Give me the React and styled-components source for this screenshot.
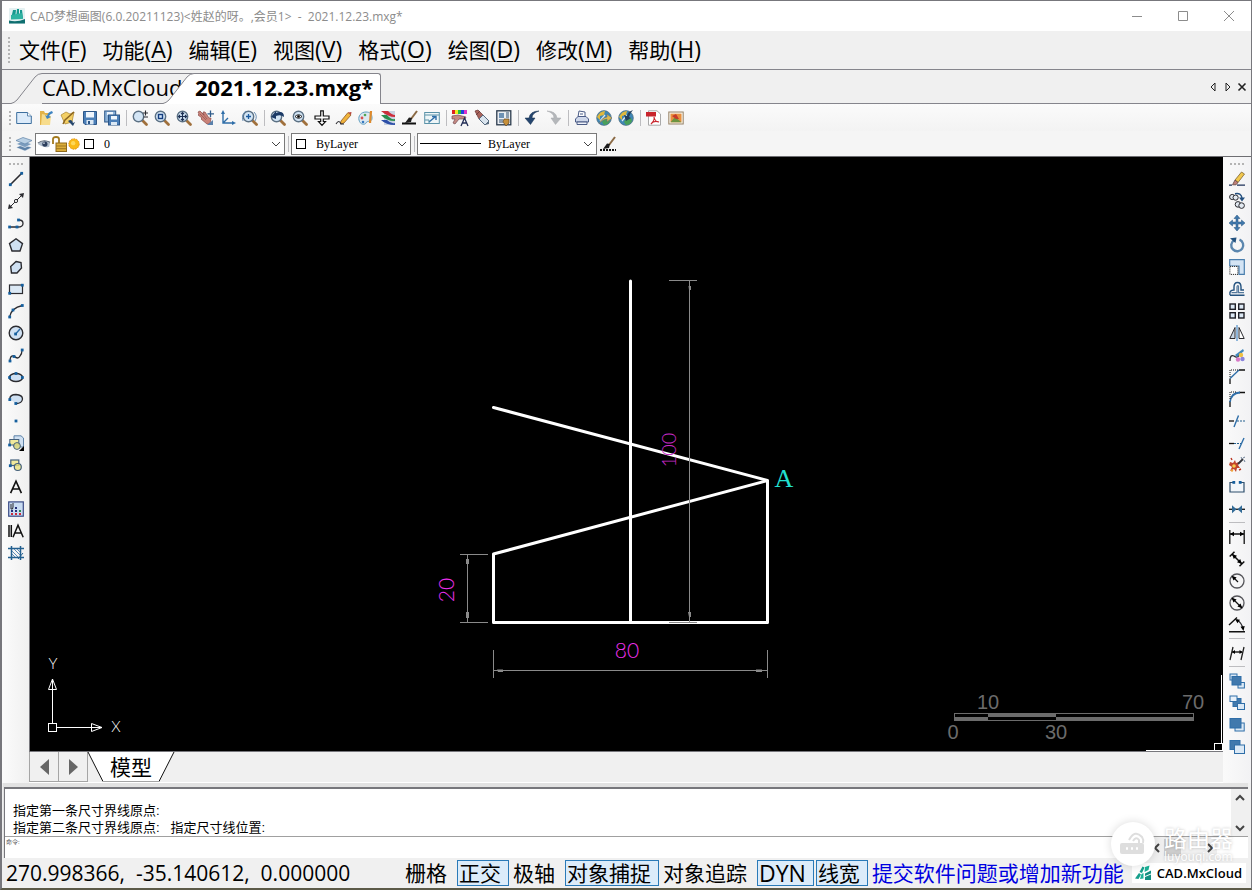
import React from "react";
import styled, { createGlobalStyle, css } from "styled-components";

const GlobalStyle = createGlobalStyle`
  * {
    box-sizing: border-box;
  }

  body {
    margin: 0;
    background: #f0f0f0;
    color: #000;
    font-family: "Open Sans", "Noto Sans CJK SC", sans-serif;
  }

  button, input, select {
    font-family: inherit;
    color: inherit;
  }
`;

/* ---------- icons, all on a 16 x 16 grid ---------- */

const INK = "#2b2b30";
const BLUE = "#2f6ea8";
const PALE = "#cfe0f2";

const line = { fill: "none", stroke: INK, strokeWidth: 1.3 };
const blueLine = { fill: "none", stroke: BLUE, strokeWidth: 1.4 };

const Dots = ({ at }) =>
  at.map(([x, y]) => (
    <rect key={`${x}-${y}`} x={x - 1.4} y={y - 1.4} width="2.8" height="2.8" fill="#155f9e" />
  ));

const Lens = ({ children }) => (
  <>
    <path d="M10 10 L14.5 14.5" stroke="#a0703c" strokeWidth="2.8" strokeLinecap="round" />
    <circle cx="6.5" cy="6.5" r="5.2" fill="#d3e5f5" stroke="#5c7184" strokeWidth="1.4" />
    {children}
  </>
);

const Globe = () => (
  <>
    <circle cx="8" cy="8" r="7.4" fill="#3f87b5" stroke="#4c6473" strokeWidth=".6" />
    <path d="M1 7 Q4 1 9 1 L8 5 L4 6 L4 10 Z" fill="#e0b83c" />
    <path d="M8 9 L13 8 L14 11 Q12 15 8 15 L6 12 Z" fill="#49a05a" />
    <path d="M4 11 L9 5" stroke="#dfeaf2" strokeWidth="1.2" />
  </>
);

const Brush = () => (
  <>
    <path d="M15 1 L9 9" stroke="#8b6a45" strokeWidth="2" />
    <path d="M10 8 L7 7.5 L3 13 L9 12 Z" fill="#1d1d1d" />
  </>
);

const drawings = {
  newFile: (
    <>
      <path d="M.7 2.5 H11.5 L15.3 6 V13.5 H.7 Z" fill="#dcebfa" stroke="#3d6f9e" />
      <path d="M11.5 2.5 V6 H15.3" fill="#fff" stroke="#3d6f9e" strokeWidth=".8" />
    </>
  ),
  open: (
    <>
      <path d="M2 1 L6 1 L7 3 L11 3 L11 14 L2 15 Z" fill="#e3b348" />
      <path d="M4 4 L13 6 L12 15 L3 15 Z" fill="#f7dc8c" />
      <path d="M14 1 Q10 2 9 6 L7 5 L9 9 L13 7 L11 6 Q12 4 15 3 Z" fill="#3e83c0" />
    </>
  ),
  edit: (
    <>
      <path d="M1 5 L6 2 L10 4 L14 2 L12 12 L5 14 Z" fill="#f3cf64" stroke="#a8822d" strokeWidth=".7" />
      <path d="M14 2 L5 10 L3 14" fill="none" stroke="#8a6420" strokeWidth="1.5" />
      <path d="M8 11 Q12 8 13 13 L15 12 L13 16 L10 13 Z" fill="#26466c" />
    </>
  ),
  save: (
    <>
      <path d="M1.5 1.5 H14.5 V14.5 H3 L1.5 13 Z" fill="#4b7fb8" stroke="#2c5688" />
      <rect x="4" y="2" width="8" height="5.5" fill="#eef5fc" />
      <rect x="4.5" y="10" width="7" height="4.5" fill="#dbe8f4" />
      <rect x="6" y="11" width="2" height="3" fill="#2c5688" />
    </>
  ),
  saveAll: (
    <>
      <rect x=".7" y="1" width="11" height="11" fill="#8db2d8" stroke="#2c5688" />
      <rect x="3" y="2" width="6" height="3" fill="#eef5fc" />
      <rect x="4.5" y="5" width="11" height="10" fill="#4b7fb8" stroke="#2c5688" />
      <rect x="7" y="6" width="6" height="3.5" fill="#eef5fc" />
      <rect x="7" y="12" width="6" height="3" fill="#dbe8f4" />
    </>
  ),
  zoomInOut: <Lens><path d="M11 3 H16 M13.5 .5 V5.5 M11.5 7 H16" {...line} strokeWidth="1.1" /></Lens>,
  zoomWindow: <Lens><rect x="4.5" y="4.5" width="4" height="4" {...blueLine} stroke="#153e80" /></Lens>,
  zoomExtents: (
    <Lens>
      <path
        d="M6.5 2.5 V10.5 M2.5 6.5 H10.5 M5 4 L6.5 2.5 L8 4 M5 9 L6.5 10.5 L8 9 M4 5 L2.5 6.5 L4 8 M9 5 L10.5 6.5 L9 8"
        fill="none"
        stroke="#1c2f52"
        strokeWidth="1.1"
      />
    </Lens>
  ),
  pan: (
    <>
      <path d="M0 2 L2 1 L6 5 L5 2 L7 2 L11 8 L13 8 L12 14 L9 14 L3 9 L4 8 L0 5 L1 4 Z" fill="#c98278" stroke="#8a4a48" strokeWidth=".7" />
      <path d="M2 4 L8 10 M4 3 L9 9" stroke="#8a4a48" strokeWidth=".6" />
      <path d="M12.5 .5 V7 M9.5 3.8 H16" stroke="#2f5c8a" strokeWidth="1.3" />
      <path d="M9 15 L15 10 L15 15 Z" fill="#5a81ab" />
    </>
  ),
  axes: (
    <>
      <path d="M3 3 V13 H13 M3 13 L8 8" {...blueLine} />
      <path d="M3 0 L5 4 H1 Z M16 13 L12 11 V15 Z" fill={BLUE} />
    </>
  ),
  zoomRealtime: (
    <>
      <Lens><path d="M4 6.5 H9 M6.5 4 V9" stroke="#1d5ca0" strokeWidth="1.3" /></Lens>
      <path d="M1 11 Q-1 4 4 1 M12 2 Q16 6 13 11" fill="none" stroke="#6c90b4" />
    </>
  ),
  zoomPrevious: <Lens><path d="M1 7 L6 1 V3 Q14 0 14 7 Q11 4 6 6 V9 Z" fill="#1b3a66" /></Lens>,
  zoomView: <Lens><path d="M3 6.5 Q6.5 3 10 6.5 Q6.5 10 3 6.5 Z" fill="#fff" stroke="#222" /><circle cx="6.5" cy="6.5" r="1.3" /></Lens>,
  panArrows: <path d="M6.7 .8 H9.3 V6 H15 V9 H9.3 V11.5 H11.5 L8 15.4 L4.5 11.5 H6.7 V9 H1 V6 H6.7 Z" fill="#fff" stroke="#111" strokeWidth="1.2" />,
  pencil: (
    <>
      <path d="M5 11 L12 2.5 L15 5 L8 13 L4.5 14 Z" fill="#f0b43c" stroke="#8f5a24" strokeWidth=".8" />
      <path d="M12 2.5 L15 5 L15.5 2 Z" fill="#b8443c" />
      <path d="M0 14 Q3 9 5 14 L8 14" {...line} strokeWidth="1.1" />
    </>
  ),
  palette: (
    <>
      <path d="M8 2 C3 2 0 6 1 10 C2 15 7 15 8 13 C9 10 14 13 14 8 C14 4 12 2 8 2 Z" fill="#dde8f1" stroke="#5d9ec0" />
      <circle cx="4" cy="8" r="1.4" fill="#d65050" />
      <circle cx="7" cy="5" r="1.3" fill="#51a555" />
      <circle cx="5" cy="12" r="1.3" fill="#3678c0" />
      <path d="M13 1 L12 13" stroke="#de8a2c" strokeWidth="2.2" />
    </>
  ),
  colorLayers: (
    <>
      <rect x="4" y="1" width="11" height="14" fill="#c9d3e2" />
      <path d="M1 1 H8 Q12 5 15 5 V7 Q8 7 1 1 Z" fill="#ce2f3d" />
      <path d="M1 5 H7 Q11 10 15 9 V11 Q6 11 1 5 Z" fill="#2b8d4e" />
      <path d="M1 10 H7 Q11 14 15 13 V15 Q6 15 1 10 Z" fill="#2d4fa8" />
    </>
  ),
  brush: <><Brush /><path d="M0 13.5 H14 " stroke="#111" strokeWidth="2" /></>,
  resize: (
    <>
      <rect x=".7" y="2.5" width="14.6" height="11" fill="#eef6f8" stroke="#5b93a8" />
      <path d="M1 5 H15" stroke="#5b93a8" />
      <path d="M5 12 L11 7 M8 6.5 H12 V10" {...blueLine} />
      <path d="M1 10 H5 V13" fill="none" stroke="#5b93a8" />
    </>
  ),
  textStyle: (
    <>
      <path d="M0 0 H3 V4 H0 Z" fill="#d22" /><path d="M3 0 H6 V4 H3 Z" fill="#ee2" /><path d="M6 0 H9 V4 H6 Z" fill="#2b4" />
      <path d="M9 0 H12 V4 H9 Z" fill="#24d" /><path d="M12 0 H15 V4 H12 Z" fill="#d3c" />
      <path d="M0 6 L6 5 L14 7 L13 9 L7 9 L3 14 L1 13 L3 9 L0 9 Z" fill="#c58a83" stroke="#734a52" strokeWidth=".7" />
      <path d="M9 16 L12.5 8 L16 16 M10 13 H15" fill="none" stroke="#222d55" strokeWidth="1.3" />
    </>
  ),
  match: (
    <>
      <path d="M1 1 L4 0 L9 5 L5 9 Z" fill="#a8645c" stroke="#633" strokeWidth=".7" />
      <path d="M2 5 L6 1" stroke="#633" strokeWidth=".8" />
      <path d="M9 5 L15 11 L11 15 L5 9 Z" fill="#d9e4ee" stroke="#586c80" />
      <path d="M11 15 L15 11 L15 14 Z" fill="#586c80" />
    </>
  ),
  properties: (
    <>
      <rect x=".8" y=".8" width="14" height="14" fill="#e9edf2" stroke="#2a3a4c" strokeWidth="1.3" />
      <rect x="3" y="3" width="5" height="5" fill="#6e92b5" />
      <path d="M10 3 H13 M10 5 H13 M10 7 H13 M3 10 H7 M3 12 H7" stroke="#33506e" />
      <path d="M8 9 H13 V13 L10 16 L7 12 Z" fill="#c7903a" stroke="#5f4526" strokeWidth=".7" />
    </>
  ),
  undo: <path d="M15 1 Q6 1 5 8 L1 8 L6.5 14.5 L11 8 L8 8 Q8 3 15 1 Z" fill="#24456f" stroke="#16304f" strokeWidth=".5" />,
  redo: <path d="M1 1 Q10 1 11 8 L15 8 L9.5 14.5 L5 8 L8 8 Q8 3 1 1 Z" fill="#b4b7ba" stroke="#a6a9ac" strokeWidth=".5" />,
  print: (
    <>
      <path d="M4 7 L5 1 L11 2 L11 7 Z" fill="#fff" stroke="#4b5c86" />
      <path d="M1.5 9 L4 6.5 H12 L14.5 9 V12 H1.5 Z" fill="#cfd8ea" stroke="#4b5c86" />
      <path d="M3 12 H13 V14.5 H3 Z" fill="#eef1f8" stroke="#4b5c86" />
      <path d="M6 4 H9" stroke="#4b5c86" />
    </>
  ),
  globeSend: <><Globe /><path d="M3 14 Q5 8 11 7 V4 L16 8 L11 12 V9 Q7 9 3 14 Z" fill="#dcb850" stroke="#61717d" strokeWidth=".6" /></>,
  globeGet: <><Globe /><path d="M15 0 Q9 2 9 6 L6 5 L8 11 L13 8 L11 7 Q12 3 15 0 Z" fill="#233f5d" /></>,
  pdf: (
    <>
      <path d="M2.5 .8 H11 L14.5 4 V15.2 H2.5 Z" fill="#fff" stroke="#a9a9a9" />
      <rect x="0" y="2" width="10" height="4.5" fill="#c8242c" />
      <path d="M5 14 Q9 10 8 7 Q9 12 13 12 Q8 10 5 14 Z" fill="none" stroke="#c8242c" strokeWidth="1.1" />
    </>
  ),
  picture: (
    <>
      <rect x=".8" y="2" width="14.4" height="12" fill="#f7f2e6" stroke="#98846a" />
      <rect x="2.5" y="3.7" width="11" height="8.6" fill="#e98f3e" />
      <path d="M2.5 12.3 L7 7 L13.5 12.3 Z" fill="#6d9440" />
      <path d="M4 6 L8 4 L11 9 L8 9 Z" fill="#c43a29" />
    </>
  ),
  layerStack: (
    <>
      <path d="M0 11.5 L7 8.5 L16 11.5 L9 15 Z" fill="#5d82a8" stroke="#fff" strokeWidth=".5" />
      <path d="M0 8 L7 5 L16 8 L9 11.5 Z" fill="#7c9dbe" stroke="#fff" strokeWidth=".6" />
      <path d="M0 4.5 L7 1.5 L16 4.5 L9 8 Z" fill="#b9d0e4" stroke="#5f83a8" strokeWidth=".7" />
    </>
  ),
  layerBrush: <><Brush /><path d="M0 14 H16" stroke="#111" strokeWidth="2" strokeDasharray="2 1" /></>,
  // draw
  lineTool: <><path d="M2.5 13.5 L13.5 2.5" {...line} strokeWidth="1.6" /><Dots at={[[2.3, 13.7], [13.7, 2.3]]} /></>,
  xline: (
    <>
      <path d="M2 14 L14 2" {...line} strokeWidth="1" />
      <path d="M0 16 L1 11 L5 15 Z M16 0 L11 1 L15 5 Z" fill={INK} />
      <circle cx="8" cy="8" r="1.6" fill="#fff" stroke={INK} />
    </>
  ),
  polyline: <><path d="M2 12 H10 M10 12 Q15 12 15 8.5 Q15 5 11 5" {...line} /><Dots at={[[1.6, 12], [9, 12], [10.5, 5]]} /></>,
  polygon: <path d="M8 1.8 L14.5 6.6 L12 14 H4 L1.5 6.6 Z" fill={PALE} stroke={INK} strokeWidth="1.4" />,
  freePolygon: <path d="M8 2.5 L13 3.5 L13.5 9 L9 14 H3.5 L2.7 7.5 Z" fill={PALE} stroke={INK} strokeWidth="1.4" />,
  rectangle: <><rect x="1.5" y="4" width="13" height="8.5" fill="#dce9f5" stroke={INK} strokeWidth="1.2" /><Dots at={[[1.7, 12.3], [14.3, 4.2]]} /></>,
  arc: <><path d="M1.5 14 Q3 5 14.5 2.5" {...line} /><Dots at={[[1.7, 14], [5, 7], [14.3, 2.5]]} /></>,
  circle: <><circle cx="8" cy="8" r="6.8" fill={PALE} stroke={INK} strokeWidth="1.4" /><path d="M8 8.5 L12 4" {...blueLine} /><Dots at={[[7.6, 9]]} /></>,
  spline: <><path d="M2 14 Q2 8 6 9 Q10 13 12 9 Q14 7 14 3" {...line} /><Dots at={[[2, 14], [6, 9.5], [14.2, 3]]} /></>,
  ellipse: <><ellipse cx="8" cy="8.5" rx="6.6" ry="4" fill={PALE} stroke={INK} strokeWidth="1.4" /><Dots at={[[1.6, 8.5], [14.4, 8.5], [8, 4.5]]} /></>,
  ellipseArc: <><path d="M1.7 8 Q2 3.5 8 3.5 Q14.5 4 14.5 8 Q14 12.5 8 12.5" fill={PALE} stroke={INK} strokeWidth="1.3" /><Dots at={[[1.8, 8.6], [7.8, 12.5]]} /></>,
  point: <Dots at={[[8, 8]]} />,
  insertBlock: (
    <>
      <path d="M6 .8 H13 L15.5 3 V12 H6 Z" fill={PALE} stroke="#5f83a8" />
      <rect x="1.8" y="4.5" width="9" height="5.5" fill="#f1ea9c" stroke="#44607c" />
      <circle cx="9" cy="11" r="3.4" fill="#e9e27c" fillOpacity=".8" stroke="#44607c" />
      <Dots at={[[1.6, 10]]} />
      <path d="M16 11 V16 H11 Z" fill="#000" />
    </>
  ),
  makeBlock: (
    <>
      <rect x="2.8" y="3" width="8" height="5.5" fill="#f1ea9c" stroke="#44607c" strokeWidth="1.2" />
      <circle cx="9.8" cy="10" r="3.5" fill="#e9e27c" fillOpacity=".8" stroke="#44607c" strokeWidth="1.2" />
      <Dots at={[[2.3, 8.7]]} />
    </>
  ),
  text: <path d="M2.6 14.2 L8 2.2 L13.4 14.2 M4.7 10 H11.3" fill="none" stroke="#111" strokeWidth="1.6" />,
  table: (
    <>
      <rect x=".7" y=".9" width="14.6" height="14.3" fill="#c9dcf3" stroke="#3a4b86" strokeWidth="1.2" />
      <path d="M3 3 V8 Q5 9 5 6 V2" {...line} strokeWidth="1" />
      <path d="M7 7 H9 M3 10 H5 M7 10 H9" stroke="#26317a" strokeWidth="2" />
      <path d="M11 10 H13" stroke="#2a8b54" strokeWidth="2" />
      <path d="M3 13 H5 M7 13 H9 M11 13 H13" stroke="#cc2b3d" strokeWidth="2" />
    </>
  ),
  mtext: <path d="M1 2 V14 M3.3 2 V14 M5 14.2 L10 2.2 L15.2 14.2 M7 10 H13.3" fill="none" stroke="#111" strokeWidth="1.5" />,
  hatch: (
    <>
      <path d="M3.5 1 V15 M12.5 1 V15 M0 3.5 H16 M0 12.5 H16" stroke="#24608f" strokeWidth="1.5" />
      <path d="M4 6 L10 12 M4 9 L7 12 M6 4 L12 10 M9 4 L12 7" stroke="#4b7fae" strokeWidth=".9" />
      <path d="M10 14 L15 8" stroke="#24608f" />
    </>
  ),
  // modify
  erase: (
    <>
      <path d="M6 9 L12.5 1 L15.5 3 L9 11.5 Z" fill="#f1c74d" stroke="#7d6431" strokeWidth=".8" />
      <path d="M6 9 L9 11.5 L7 13.8 L3.5 13.8 Z" fill="#c08078" stroke="#5d4444" strokeWidth=".8" />
      <path d="M0 14.2 H3 M8 14.2 H16" stroke="#1c3159" strokeWidth="1.2" />
    </>
  ),
  copy: (
    <>
      <circle cx="3.2" cy="4" r="2.6" fill="#e3eaf2" stroke={INK} />
      <circle cx="6.6" cy="4.6" r="2.6" fill="#e3eaf2" stroke={INK} />
      <circle cx="9" cy="11.4" r="2.8" fill="#e3eaf2" stroke={INK} />
      <circle cx="12.6" cy="12.6" r="2.8" fill="#e3eaf2" stroke={INK} />
      <path d="M6 .8 Q12 -.5 13 5" {...blueLine} stroke="#234f7f" />
      <path d="M10 4.5 H16 L13 8.5 Z" fill="#234f7f" />
    </>
  ),
  move: <path d="M8 0 L11 3.5 H9 V7 H12.5 V5 L16 8 L12.5 11 V9 H9 V12.5 H11 L8 16 L5 12.5 H7 V9 H3.5 V11 L0 8 L3.5 5 V7 H7 V3.5 H5 Z" fill="#4179ad" stroke="#24527f" strokeWidth=".5" />,
  rotate: <><path d="M5 3.2 A6 6 0 1 0 10.5 2.7" fill="none" stroke="#5b86ae" strokeWidth="2.4" /><path d="M1 1.2 L7.5 .5 L6.5 6 Z" fill="#24527f" /></>,
  scale: (
    <>
      <path d="M.7 .7 H15.3 V15.3 H10 V7 H.7 Z" fill="#d4e4f4" stroke="#4a7ead" strokeWidth="1.2" />
      <rect x=".9" y="7.4" width="8" height="8" fill="#fff" stroke="#111" strokeDasharray="1 1" />
    </>
  ),
  offset: (
    <>
      <path d="M1 14.2 H15.5 M1 14 Q0 9 5 9 V6 Q5 1.5 8.5 1.5 Q12 1.5 12 6 V9 H15" fill="none" stroke="#24527f" strokeWidth="1.4" />
      <path d="M2.5 11.6 H8 V6.5 Q8 4 9.5 5 V11.6 H15" fill="none" stroke="#55799c" strokeWidth="1.2" />
    </>
  ),
  array: (
    <g fill="#dce8f4" stroke="#1f1f26" strokeWidth="1.4">
      <rect x="1" y="1" width="5.3" height="5.3" /><rect x="9.7" y="1" width="5.3" height="5.3" />
      <rect x="1" y="9.7" width="5.3" height="5.3" /><rect x="9.7" y="9.7" width="5.3" height="5.3" />
    </g>
  ),
  mirror: (
    <>
      <path d="M6 2.5 V13.5 H.8 Z" fill="#c8d6e4" stroke={INK} />
      <path d="M10 2.5 V13.5 H15.2 Z" fill="#fff" stroke={INK} />
      <path d="M8 0 V16" stroke="#2a78c0" />
    </>
  ),
  splineEdit: (
    <>
      <path d="M1 14 Q1 7 5 9 Q9 12 10 7" {...line} />
      <path d="M6 8 L14 2 L15 4 L8 10 Z" fill="#3f86bb" />
      <circle cx="12" cy="8" r="2.2" fill="#eebf42" /><circle cx="9" cy="12.5" r="2.2" fill="#d678c6" />
      <circle cx="13.5" cy="12" r="2.2" fill="#8a83dc" />
    </>
  ),
  chamfer: <><path d="M1 15 V9.5 M10 1 H16" stroke="#111" strokeWidth="1.3" /><path d="M1 9.5 L10 1" {...blueLine} /><path d="M1 8 V1 H9" fill="none" stroke="#111" strokeDasharray="1 1" /></>,
  fillet: <><path d="M1 16 V10 M10 1.5 H16" stroke="#111" strokeWidth="1.3" /><path d="M1 11 Q2 2 11 1.5" {...blueLine} strokeWidth="1.8" /><path d="M1 8 V1 H8" fill="none" stroke="#111" strokeDasharray="1 1" /></>,
  trim: <><path d="M0 8 H5" stroke="#111" strokeWidth="1.3" /><path d="M5 14 L9.5 2.5" {...blueLine} /><path d="M8 8 H16" stroke="#24608f" strokeDasharray="2 1" /></>,
  extend: <><path d="M0 8.5 H5" stroke="#111" strokeWidth="1.3" /><path d="M5 8.5 H12" stroke="#24608f" strokeDasharray="2 1" /><path d="M10 14 L15 3" {...blueLine} /></>,
  explode: (
    <>
      <path d="M1 5 L4 6 L6 3 L7 6 L10 5 L9 8 L11 11 L8 11 L7 15 L5 12 L1 14 L3 10 L0 8 Z" fill="#c0442c" />
      <circle cx="5" cy="9" r="1.8" fill="#f6ca4b" />
      <circle cx="3" cy="13.5" r="1.2" fill="#f0a23a" />
      <path d="M9 7 L14 2" stroke="#33363c" strokeWidth="1.8" />
      <path d="M12 0 L13 2 M15 3 L16 5 M14 1 L16 0" stroke="#6d7f96" />
      <path d="M10 13 L12 12 M3 3 L2 1" stroke="#b83420" strokeWidth="1.4" />
    </>
  ),
  breakTool: <><path d="M4.5 3.5 H1 V13 H15 V3.5 H11.5" fill="#f2f6fa" stroke="#2e4e6c" strokeWidth="1.2" /><Dots at={[[4.8, 3.4], [11.2, 3.4]]} /></>,
  join: <><path d="M0 8.3 H16" stroke="#222" strokeWidth="1.4" /><path d="M3 4.3 L7.5 8.3 L3 12.3 Z M13 4.3 L8.5 8.3 L13 12.3 Z" fill="#326b97" /></>,
  dimLinear: <><path d="M.8 1 V15 M15.2 1 V15 M1 5 H15" stroke="#111" strokeWidth="1.3" /><path d="M1 5 L5 2.7 V7.3 Z M15 5 L11 2.7 V7.3 Z" /></>,
  dimAligned: <><path d="M.7 5.5 L5.5 .7 M10.5 15.3 L15.3 10.5 M3 3 L13 13" stroke="#111" strokeWidth="1.5" /><path d="M3 3 L8 4.8 L4.8 8 Z M13 13 L8 11.2 L11.2 8 Z" /></>,
  dimRadius: <><circle cx="8" cy="8" r="7" fill="none" stroke="#55555a" strokeWidth="1.3" /><path d="M9 9 L4 4" stroke="#111" strokeWidth="1.3" /><path d="M2.6 2.8 L7.6 4.5 L4.5 7.4 Z" /></>,
  dimDiameter: <><circle cx="8" cy="8" r="7" fill="none" stroke="#55555a" strokeWidth="1.3" /><path d="M3 3 L13 13" stroke="#111" strokeWidth="1.3" /><path d="M2.6 2.8 L7.6 4.5 L4.5 7.4 Z M13.4 13.2 L8.4 11.5 L11.5 8.6 Z" /></>,
  dimAngular: <><path d="M0 14.8 H16 M0 8 L8 .5" stroke="#111" strokeWidth="1.4" /><path d="M8 3 Q13 6 14 12" {...line} /><path d="M6 2 L11 2.8 L8.5 6.3 Z M14.5 14 L11.5 9.7 L15.7 9 Z" /></>,
  dimContinue: <><path d="M1 15 L4 2 M12 15 L15 2 M3 7 H13" stroke="#222" strokeWidth="1.3" /><path d="M3 7 L6 5 V9 Z M13.5 7 L10.5 5 V9 Z" /></>,
  bringFront: <g stroke={BLUE}><rect x="1" y="1" width="7" height="6" fill="#dbe9f6" /><rect x="9" y="9.5" width="6.4" height="5.5" fill="#dbe9f6" /><rect x="3" y="3.5" width="9" height="8.5" fill="#4179ad" /></g>,
  sendBack: <g stroke={BLUE}><rect x="4" y="3.5" width="8" height="8" fill="#4179ad" /><rect x="1" y="1" width="7" height="5.5" fill="#e8f1fa" /><rect x="8.5" y="8.5" width="7" height="6" fill="#dbe9f6" /></g>,
  bringAbove: <g stroke={BLUE}><rect x="6" y="6" width="9.2" height="8" fill="#dbe9f6" /><rect x="1" y="1.5" width="11" height="9.5" fill="#4179ad" /></g>,
  sendUnder: <g stroke={BLUE}><rect x="1" y="1.5" width="10" height="9" fill="#4179ad" /><rect x="5.5" y="6" width="10" height="8.5" fill="#dbe9f6" /></g>,
  eye: <><path d="M1 8 Q7 2 15 6 L14 11 Q7 13 1 8 Z" fill="#aebccb" /><path d="M1 7 Q7 2 15 6" fill="none" stroke="#5b6675" strokeWidth="1.2" /><circle cx="9" cy="8" r="3" fill="#2c3e5d" /><circle cx="8" cy="7" r=".9" fill="#dfe7f0" /></>,
  unlock: <><path d="M2 8 V3 Q2 1 5 1 Q8 1 8 3 V8" fill="none" stroke="#a37a1e" strokeWidth="1.8" /><rect x="5" y="7" width="10.5" height="8.5" fill="#dcae3a" stroke="#8f6a1c" /><path d="M5 10 H15 M5 12.7 H15" stroke="#9d7622" /></>,
  sun: <><circle cx="8" cy="8" r="6" fill="#f9b917" stroke="#dc8d12" strokeDasharray="2 1" /><circle cx="7" cy="7" r="2.5" fill="#fdd85a" /></>,
  swatch: <rect x="3.5" y="3.5" width="9" height="9" fill="#fff" stroke="#000" />,
};

const Svg = styled.svg`
  display: block;
  flex: none;
  overflow: visible;
`;

const Icon = ({ name, size = 16 }) => (
  <Svg width={size} height={size} viewBox="0 0 16 16" aria-hidden="true">
    {drawings[name]}
  </Svg>
);

const chevrons = {
  down: "M1 3 L5 7 L9 3",
  up: "M1 7 L5 3 L9 7",
  left: "M7 1 L3 5 L7 9",
  right: "M3 1 L7 5 L3 9",
};

const Chevron = ({ dir = "down", weight = 1 }) => (
  <Svg width="10" height="10" viewBox="0 0 10 10" aria-hidden="true">
    <path d={chevrons[dir]} fill="none" stroke="#444" strokeWidth={weight} />
  </Svg>
);

const AppLogo = () => (
  <Svg width="16" height="16" viewBox="0 0 16 16" aria-hidden="true">
    <rect x="0" y="0" width="16" height="16" rx="1" fill="#e4f1f2" />
    <path d="M2 11 L4 2 H7 L6 11 Z M7 10 L8 1 H10 L10 10 Z M11 10 V2 H13 L14 10 Z" fill="#179a90" />
    <path d="M2 7 L13 5 L14 11 L2 11.5 Z" fill="#2fb3a2" />
    <path d="M0 12.5 Q8 14.5 16 11 V15.5 H0 Z" fill="#0f6f70" />
  </Svg>
);

const BrandLogo = () => (
  <Svg width="17" height="16" viewBox="0 0 17 16" aria-hidden="true">
    <path d="M0 13.5 L4 8 L6 9.5 L3.5 14 Z M4.5 7 L7.5 1.5 L9.5 2.5 L7 8 Z" fill="#17a08c" />
    <path d="M6.5 9 L8.5 8 L8.5 13.5 L5 14 Z M10 2 L14.5 .5 L13.5 5 L9.5 7 Z" fill="#1bb096" />
    <path d="M10 8.5 L16 5.5 V8.5 L10 11 Z M10 12 L16 9.5 V15 H10 Z" fill="#128f80" />
  </Svg>
);

/* ---------- window frame ---------- */

const AppWindow = styled.div`
  min-height: 100vh;
  display: flex;
  flex-direction: column;
  border: solid #77777c;
  border-width: 1px 1px 2px 2px;
  border-bottom-color: #5c5a48;
  background: #f0f0f0;
`;

const TitleBar = styled.header`
  height: 30px;
  display: flex;
  align-items: center;
  gap: 5px;
  padding: 0 16px 0 7px;
  background: #fff;
`;

const Title = styled.h1`
  flex: 1;
  margin: 0;
  font-size: 12px;
  font-weight: 400;
  color: #8c8c8c;
  white-space: pre;
`;

const WindowButtons = styled.div`
  display: flex;
  gap: 34px;
`;

const PlainButton = styled.button`
  display: flex;
  align-items: center;
  justify-content: center;
  padding: 0;
  border: 0;
  background: none;
`;

const MenuBar = styled.nav`
  height: 38px;
  display: flex;
  align-items: center;
  padding-left: 4px;
`;

const MenuItem = styled.button`
  padding: 0 8px;
  border: 0;
  background: none;
  font-size: 21px;
  line-height: 28px;
  white-space: nowrap;

  &:first-of-type {
    padding-left: 7px;
  }
`;

const Latin = styled.span`
  font-size: 23px;
  line-height: 24px;

  u {
    text-decoration-thickness: 1px;
    text-underline-offset: 3px;
  }
`;

const Grip = styled.span`
  flex: none;
  ${({ $vertical }) =>
    $vertical
      ? css`
          width: 14px;
          height: 2px;
          margin: 6px 0 3px;
          background: repeating-linear-gradient(90deg, #b4b4b4 0 2px, transparent 2px 4px);
        `
      : css`
          width: 2px;
          height: ${({ $length }) => $length || 14}px;
          margin: 0 2px;
          background: repeating-linear-gradient(#b4b4b4 0 2px, transparent 2px 4px);
        `}
`;

/* ---------- document tabs ---------- */

const TabStrip = styled.div`
  height: 35px;
  display: flex;
  align-items: flex-end;
  padding: 0 4px 0 9px;
  border-top: 1px solid #85858c;
  border-bottom: 1px solid #85858c;
`;

const TabButton = styled.button`
  display: flex;
  padding: 0;
  border: 0;
  background: none;
  height: 31px;
  margin: 0 0 -1px;
  font-size: 22px;
  line-height: 26px;
  font-weight: ${({ $active }) => ($active ? 700 : 400)};

  & + & {
    margin-left: -31px;
    z-index: 1;
  }
`;

const TabLabel = styled.span`
  height: 31px;
  overflow: hidden;
  white-space: nowrap;
  border-top: 1px solid #85858c;
  ${({ $active }) =>
    $active
      ? css`
          padding: 0 7px 0 1px;
          border-right: 1px solid #85858c;
          border-radius: 0 3px 0 0;
          background: #fff;
        `
      : css`
          width: 152px;
          text-align: left;
        `}
`;

const TabControls = styled.div`
  display: flex;
  align-items: center;
  gap: 3px;
  height: 32px;
  margin-left: auto;
`;

const DocumentTab = ({ active, children }) => (
  <TabButton type="button" $active={active}>
    <Svg width="31" height="31" viewBox="0 0 31 31" aria-hidden="true">
      <path
        d="M0 30.5 Q3 30 6 27 L24 4 Q27 .5 31 .5 V31 H0 Z"
        fill={active ? "#fff" : "#f0f0f0"}
      />
      <path d="M0 30.5 Q3 30 6 27 L24 4 Q27 .5 31 .5" fill="none" stroke="#85858c" />
    </Svg>
    <TabLabel $active={active}>{children}</TabLabel>
  </TabButton>
);

/* ---------- toolbars ---------- */

const Toolbar = styled.div`
  height: 27px;
  display: flex;
  align-items: center;
  padding-left: 5px;
  background: linear-gradient(#fbfbfb, #f3f3f3);
`;

const SideBar = styled(Toolbar)`
  flex: none;
  width: ${({ $width }) => $width}px;
  height: auto;
  flex-direction: column;
  padding: 0;
  background: ${({ $right }) =>
    $right ? "linear-gradient(90deg, #fafafa, #f2f2f4)" : "linear-gradient(90deg, #fbfbfb, #f0f0f0)"};
`;

const ToolButton = styled.button`
  flex: none;
  width: 22px;
  height: 22px;
  display: flex;
  align-items: center;
  justify-content: center;
  padding: 0;
  border: 0;
  background: none;

  &:hover {
    background: #d8e9f7;
  }
`;

const Separator = styled.span`
  flex: none;
  background: #bdbdc0;
  ${({ $vertical }) =>
    $vertical
      ? css`
          width: 16px;
          height: 1px;
          margin: 2px 0 3px;
        `
      : css`
          width: 1px;
          height: 16px;
          margin: 0 2px 0 3px;
        `}
`;

const Tools = ({ items, vertical }) =>
  items.map((name, i) =>
    name === "|" ? (
      <Separator key={i} $vertical={vertical} />
    ) : (
      <ToolButton key={i} type="button" aria-label={name}>
        <Icon name={name} />
      </ToolButton>
    )
  );

const LayerBar = styled(Toolbar)`
  height: 26px;
  background: #f5f5f5;
  border-bottom: 1px solid #6e6e72;
`;

const Combo = styled.label`
  width: ${({ $width }) => $width}px;
  height: 22px;
  display: flex;
  align-items: center;
  padding: 0 3px 0 1px;
  border: 1px solid #7a7a7a;
  background: #fff;
`;

const ComboSelect = styled.select`
  flex: 1;
  min-width: 0;
  height: 20px;
  margin: 0;
  padding: 0 0 0 7px;
  border: 0;
  outline: 0;
  appearance: none;
  background: none;
  font-family: "Liberation Serif", "Noto Sans CJK SC", serif;
  font-size: 12px;
`;

const LinetypeSample = styled.span`
  width: 61px;
  height: 1px;
  margin: 0 0 0 1px;
  background: #000;
`;

/* ---------- drawing area ---------- */

const Workspace = styled.main`
  flex: 1;
  display: flex;
`;

const Center = styled.section`
  flex: 1;
  min-width: 0;
  display: flex;
  flex-direction: column;
`;

const Canvas = styled.div`
  position: relative;
  flex: 1;
  min-height: 540px;
  overflow: hidden;
  background: #000;
  border: solid #77777c;
  border-width: 0 0 1px 1px;
`;

const Overlay = styled.svg`
  position: absolute;
  bottom: 0;
  ${({ $side }) => $side}: 0;
`;

const ModelSvg = styled.svg`
  display: block;
  position: absolute;
  inset: 0;
  width: 100%;
  height: 100%;
`;

const Model = () => (
  <ModelSvg>
    <g fill="none" stroke="#fff" strokeWidth="3" strokeLinejoin="round" strokeLinecap="round">
      <path d="M600.5 124 V465" />
      <path d="M463.5 250.5 L737.5 323.5 L463.5 397 V465.5 H737.5 V323.5" />
    </g>
    <g fill="none" stroke="#8a8a8a" strokeWidth="1" shapeRendering="crispEdges">
      <path d="M639 123.5 H667 M639 465.5 H667 M659.5 123 V465" />
      <path d="M430 397.5 H458 M430 465.5 H458 M437.5 397 V465" />
      <path d="M463.5 493 V521 M737.5 493 V521 M463 513.5 H737" />
    </g>
    <g fill="#8a8a8a">
      <path d="M658.5 129 H661 V133 H659 Z M658 455 H661 V460 H659 Z" />
      <path d="M436 402 H439 V407 H436 Z M436 455 H439 V461 H436 Z" />
      <path d="M467 512.5 H473 V515 H468 Z M726 512.5 H732 V515 H726 Z" />
    </g>
    <g fill="#ec30ec" fontFamily="Lato, sans-serif" fontWeight="300" fontSize="21" textAnchor="middle">
      <text
        transform="translate(646 293) rotate(-90)"
        fill="#c82ac8"
        fontFamily="Liberation Sans Narrow, Lato, sans-serif"
        fontSize="20"
      >
        100
      </text>
      <text transform="translate(424 433) rotate(-90)">20</text>
      <text x="597" y="501">80</text>
    </g>
    <text x="754" y="330" fill="#22e0d0" fontFamily="Liberation Serif, serif" fontSize="26" textAnchor="middle">
      A
    </text>
  </ModelSvg>
);

const UcsIcon = () => (
  <Overlay $side="left" width="130" height="100">
    <g fill="none" stroke="#fff">
      <path d="M18.5 72.5 H26.5 V80.5 H18.5 Z M22.5 72 V28 M27 76.5 H72" shapeRendering="crispEdges" />
      <path d="M22.5 28 L18.5 38.5 H26.5 Z M72 76.5 L61.5 72.5 V80.5 Z" />
    </g>
    <g fill="#fff" fontFamily="Lato, sans-serif" fontWeight="300" fontSize="15" textAnchor="middle">
      <text x="23" y="18">Y</text>
      <text x="86" y="81">X</text>
    </g>
  </Overlay>
);

const ScaleBar = () => (
  <Overlay $side="right" width="289" height="100">
    <g shapeRendering="crispEdges">
      <rect x="20.5" y="62.5" width="239" height="7" fill="none" stroke="#6b6b6b" />
      <path d="M20 66 H54 V70 H20 Z M54 62 H122 V66 H54 Z M122 66 H260 V70 H122 Z" fill="#6b6b6b" />
      <path d="M287.5 24 V92 M212 99.5 H280" stroke="#fff" />
      <rect x="280.5" y="92.5" width="8" height="7" fill="none" stroke="#fff" />
    </g>
    <g fill="#6b6b6b" fontFamily="Liberation Sans, sans-serif" fontSize="20" textAnchor="middle">
      <text x="54" y="58">10</text>
      <text x="259" y="58">70</text>
      <text x="19" y="88">0</text>
      <text x="122" y="88">30</text>
    </g>
  </Overlay>
);

const SheetStrip = styled.div`
  height: 31px;
  display: flex;
  border-bottom: 1px solid #fff;
`;

const SheetArrow = styled(PlainButton)`
  width: 29px;
  height: 30px;
  border: solid #a5a5a5;
  border-width: 0 1px 1px 0;

  &:first-child {
    width: 30px;
    border-left-width: 1px;
  }
`;

const SheetTab = styled.button`
  display: grid;
  padding: 0;
  border: 0;
  background: none;
  font-size: 21px;
  line-height: 28px;

  & > * {
    grid-area: 1 / 1;
  }
`;

const SheetName = styled.span`
  align-self: center;
  text-align: center;
`;

/* ---------- command line ---------- */

const CommandPanel = styled.section`
  margin: 4px 3px 0 2px;
  border: solid #77777c;
  border-width: 2px 0 0 1px;
  background: #fff;
  outline: 4px solid #e2e2e2;
  outline-offset: 0;
  clip-path: inset(-4px 0 0 -1px);
`;

const History = styled.div`
  height: 48px;
  display: flex;
  border-bottom: 1px solid #a0a0a0;
`;

const HistoryText = styled.pre`
  flex: 1;
  margin: 0;
  padding: 13px 0 0 8px;
  overflow: hidden;
  font-family: "Liberation Sans", "Noto Sans CJK SC", sans-serif;
  font-size: 13px;
  line-height: 17px;
`;

const VerticalScroll = styled.div`
  width: 17px;
  display: flex;
  flex-direction: column;
  align-items: center;
  justify-content: space-between;
  padding: 4px 0 3px;
  background: #f0f0f0;
`;

const PromptRow = styled.div`
  height: 21px;
  display: flex;
`;

const PromptInput = styled.input`
  flex: 1;
  min-width: 0;
  height: 10px;
  padding: 0 1px;
  border: 0;
  outline: 0;
  font-size: 6px;
  line-height: 10px;

  &::placeholder {
    color: #555;
  }
`;

const HorizontalScroll = styled.div`
  width: 68px;
  display: flex;
  align-items: center;
  gap: 2px;
  margin-right: 31px;
  padding: 0 2px 0 3px;
  background: #f0f0f0;
`;

const ScrollThumb = styled.span`
  width: 17px;
  height: 17px;
  margin-right: auto;
  background: #cdcdcd;
`;

/* ---------- status bar ---------- */

const StatusBar = styled.footer`
  height: 30px;
  display: flex;
  align-items: center;
  gap: 2px;
  padding: 0 5px 0 4px;
  font-size: 21px;
  line-height: 24px;
  white-space: nowrap;
`;

const Coordinates = styled.output`
  width: 395px;
  white-space: pre;
`;

const StatusToggle = styled.button`
  height: 26px;
  padding: 0 7px 0 1px;
  border: 1px solid ${({ $on }) => ($on ? "#2a7ab8" : "transparent")};
  background: ${({ $on }) => ($on ? "#dcecfa" : "none")};
  font-size: 21px;
  line-height: 24px;
`;

const FeedbackLink = styled.a`
  padding-left: 2px;
  color: #0000e0;
  text-decoration: none;
`;

const Brand = styled.div`
  display: flex;
  align-items: center;
  gap: 5px;
  height: 20px;
  margin-left: auto;
  padding: 0 4px 0 3px;
  background: #fff;
  font-size: 13px;
  line-height: 14px;
  font-weight: 600;
`;

const Watermark = styled.div`
  position: absolute;
  right: 19px;
  bottom: 24px;
  display: flex;
  align-items: center;
  gap: 9px;
  color: #fff;
  pointer-events: none;
`;

const WatermarkDisc = styled.span`
  width: 44px;
  height: 44px;
  display: grid;
  place-items: center;
  border-radius: 50%;
  background: #fff;
  box-shadow: 0 0 10px rgba(0, 0, 0, 0.15);
`;

const WatermarkText = styled.span`
  display: flex;
  flex-direction: column;
  font-size: 12px;
  line-height: 12px;
  text-shadow: 0 0 3px rgba(0, 0, 0, 0.25);
`;

const WatermarkName = styled.span`
  font-size: 23px;
  line-height: 26px;
`;

const menus = [
  ["文件", "F"],
  ["功能", "A"],
  ["编辑", "E"],
  ["视图", "V"],
  ["格式", "O"],
  ["绘图", "D"],
  ["修改", "M"],
  ["帮助", "H"],
];

const mainTools = [
  "newFile", "open", "edit", "save", "saveAll", "|",
  "zoomInOut", "zoomWindow", "zoomExtents", "pan", "axes", "zoomRealtime", "|",
  "zoomPrevious", "zoomView", "panArrows", "pencil", "palette", "colorLayers", "brush", "resize", "|",
  "textStyle", "match", "properties", "|",
  "undo", "redo", "|",
  "print", "globeSend", "globeGet", "|",
  "pdf", "picture",
];

const drawTools = [
  "lineTool", "xline", "polyline", "polygon", "freePolygon", "rectangle",
  "arc", "circle", "spline", "ellipse", "ellipseArc", "point",
  "insertBlock", "makeBlock", "text", "table", "mtext", "hatch",
];

const modifyTools = [
  "erase", "copy", "move", "rotate", "scale", "offset", "array", "mirror",
  "splineEdit", "chamfer", "fillet", "trim", "extend", "explode", "breakTool", "join", "|",
  "dimLinear", "dimAligned", "dimRadius", "dimDiameter", "dimAngular", "|",
  "dimContinue", "|",
  "bringFront", "sendBack", "bringAbove", "sendUnder",
];

const toggles = [
  ["栅格", false],
  ["正交", true],
  ["极轴", false],
  ["对象捕捉", true],
  ["对象追踪", false],
  ["DYN", true],
  ["线宽", true],
];

const App = () => {
  return (
    <AppWindow>
      <GlobalStyle />
      <TitleBar>
        <AppLogo />
        <Title>{"CAD梦想画图(6.0.20211123)<姓赵的呀。,会员1>  -  2021.12.23.mxg*"}</Title>
        <WindowButtons>
          {["M1 6.5 H11", "M1.5 1.5 H10.5 V10.5 H1.5 Z", "M1 1 L11 11 M11 1 L1 11"].map((d, i) => (
            <PlainButton key={d} type="button" aria-label={["最小化", "最大化", "关闭"][i]}>
              <Svg width="12" height="12" viewBox="0 0 12 12">
                <path d={d} fill="none" stroke="#8c8c8c" />
              </Svg>
            </PlainButton>
          ))}
        </WindowButtons>
      </TitleBar>

      <MenuBar>
        <Grip $length={26} />
        {menus.map(([label, key]) => (
          <MenuItem key={key} type="button">
            {label}
            <Latin>
              (<u>{key}</u>)
            </Latin>
          </MenuItem>
        ))}
      </MenuBar>

      <TabStrip>
        <DocumentTab>CAD.MxCloud</DocumentTab>
        <DocumentTab active>2021.12.23.mxg*</DocumentTab>
        <TabControls>
          {["M7 2 V10 L3 6 Z", "M4 2 V10 L8 6 Z", "M2.5 2.5 L9.5 9.5 M9.5 2.5 L2.5 9.5"].map((d, i) => (
            <PlainButton key={d} type="button" aria-label={["上一个", "下一个", "关闭标签"][i]}>
              <Svg width="11" height="12" viewBox="0 0 11 12">
                <path d={d} fill="none" stroke="#222" strokeWidth={i === 2 ? 1.6 : 1} />
              </Svg>
            </PlainButton>
          ))}
        </TabControls>
      </TabStrip>

      <Toolbar>
        <Grip />
        <Tools items={mainTools} />
      </Toolbar>

      <LayerBar>
        <Grip />
        <ToolButton type="button" aria-label="图层">
          <Icon name="layerStack" />
        </ToolButton>
        <Combo $width={250}>
          <Icon name="eye" size={14} />
          <Icon name="unlock" />
          <Icon name="sun" size={14} />
          <Icon name="swatch" />
          <ComboSelect aria-label="当前图层">
            <option>0</option>
          </ComboSelect>
          <Chevron />
        </Combo>
        <Separator />
        <Combo $width={120}>
          <Icon name="swatch" />
          <ComboSelect aria-label="颜色">
            <option>ByLayer</option>
          </ComboSelect>
          <Chevron />
        </Combo>
        <Separator />
        <Combo $width={180}>
          <LinetypeSample />
          <ComboSelect aria-label="线型">
            <option>ByLayer</option>
          </ComboSelect>
          <Chevron />
        </Combo>
        <ToolButton type="button" aria-label="图层匹配">
          <Icon name="layerBrush" />
        </ToolButton>
      </LayerBar>

      <Workspace>
        <SideBar $width={27}>
          <Grip $vertical />
          <Tools items={drawTools} vertical />
        </SideBar>
        <Center>
          <Canvas>
            <Model />
            <UcsIcon />
            <ScaleBar />
          </Canvas>
          <SheetStrip>
            <SheetArrow type="button" aria-label="上一页">
              <Svg width="9" height="16"><path d="M9 0 V16 L0 8 Z" fill="#666" /></Svg>
            </SheetArrow>
            <SheetArrow type="button" aria-label="下一页">
              <Svg width="9" height="16"><path d="M0 0 V16 L9 8 Z" fill="#666" /></Svg>
            </SheetArrow>
            <SheetTab type="button">
              <Svg width="86" height="30" viewBox="0 0 86 30">
                <path d="M0 0 L15 29.5 H71 L86 0 Z" fill="#fff" />
                <path d="M0 0 L15 29.5 M71 29.5 L86 0" stroke="#111" />
                <path d="M15 29.5 H71" stroke="#a5a5a5" />
              </Svg>
              <SheetName>模型</SheetName>
            </SheetTab>
          </SheetStrip>
        </Center>
        <SideBar $width={28} $right>
          <Grip $vertical />
          <Tools items={modifyTools} vertical />
        </SideBar>
      </Workspace>

      <CommandPanel>
        <History>
          <HistoryText>{"指定第一条尺寸界线原点:\n指定第二条尺寸界线原点:   指定尺寸线位置:"}</HistoryText>
          <VerticalScroll>
            <PlainButton type="button" aria-label="向上滚动"><Chevron dir="up" weight={2} /></PlainButton>
            <PlainButton type="button" aria-label="向下滚动"><Chevron weight={2} /></PlainButton>
          </VerticalScroll>
        </History>
        <PromptRow>
          <PromptInput placeholder="命令:" aria-label="命令" />
          <HorizontalScroll>
            <PlainButton type="button" aria-label="向左滚动"><Chevron dir="left" weight={2} /></PlainButton>
            <ScrollThumb />
            <PlainButton type="button" aria-label="向右滚动"><Chevron dir="right" weight={2} /></PlainButton>
          </HorizontalScroll>
        </PromptRow>
      </CommandPanel>

      <StatusBar>
        <Coordinates>{"270.998366,  -35.140612,  0.000000"}</Coordinates>
        {toggles.map(([label, on]) => (
          <StatusToggle key={label} type="button" aria-pressed={on} $on={on}>
            {label === "DYN" ? <Latin>{label}</Latin> : label}
          </StatusToggle>
        ))}
        <FeedbackLink href="#feedback">提交软件问题或增加新功能</FeedbackLink>
        <Brand>
          <BrandLogo />
          CAD.MxCloud
        </Brand>
      </StatusBar>

      <Watermark>
        <WatermarkDisc>
          <Svg width="28" height="24" viewBox="0 0 28 24">
            <rect x="1" y="11" width="24" height="11" rx="2" fill="#dedede" />
            <path d="M7 16.5 H9 M12 16.5 H14 M17 16.5 H19" stroke="#fff" strokeWidth="2.4" />
            <path d="M10 8 Q16 -3 23 5 Q25 8 24 11 M14 9 Q17 4 20 8 V11" fill="none" stroke="#dedede" strokeWidth="2" />
          </Svg>
        </WatermarkDisc>
        <WatermarkText>
          <WatermarkName>路由器</WatermarkName>
          luyouqi.com
        </WatermarkText>
      </Watermark>
    </AppWindow>
  );
};

export default App;
